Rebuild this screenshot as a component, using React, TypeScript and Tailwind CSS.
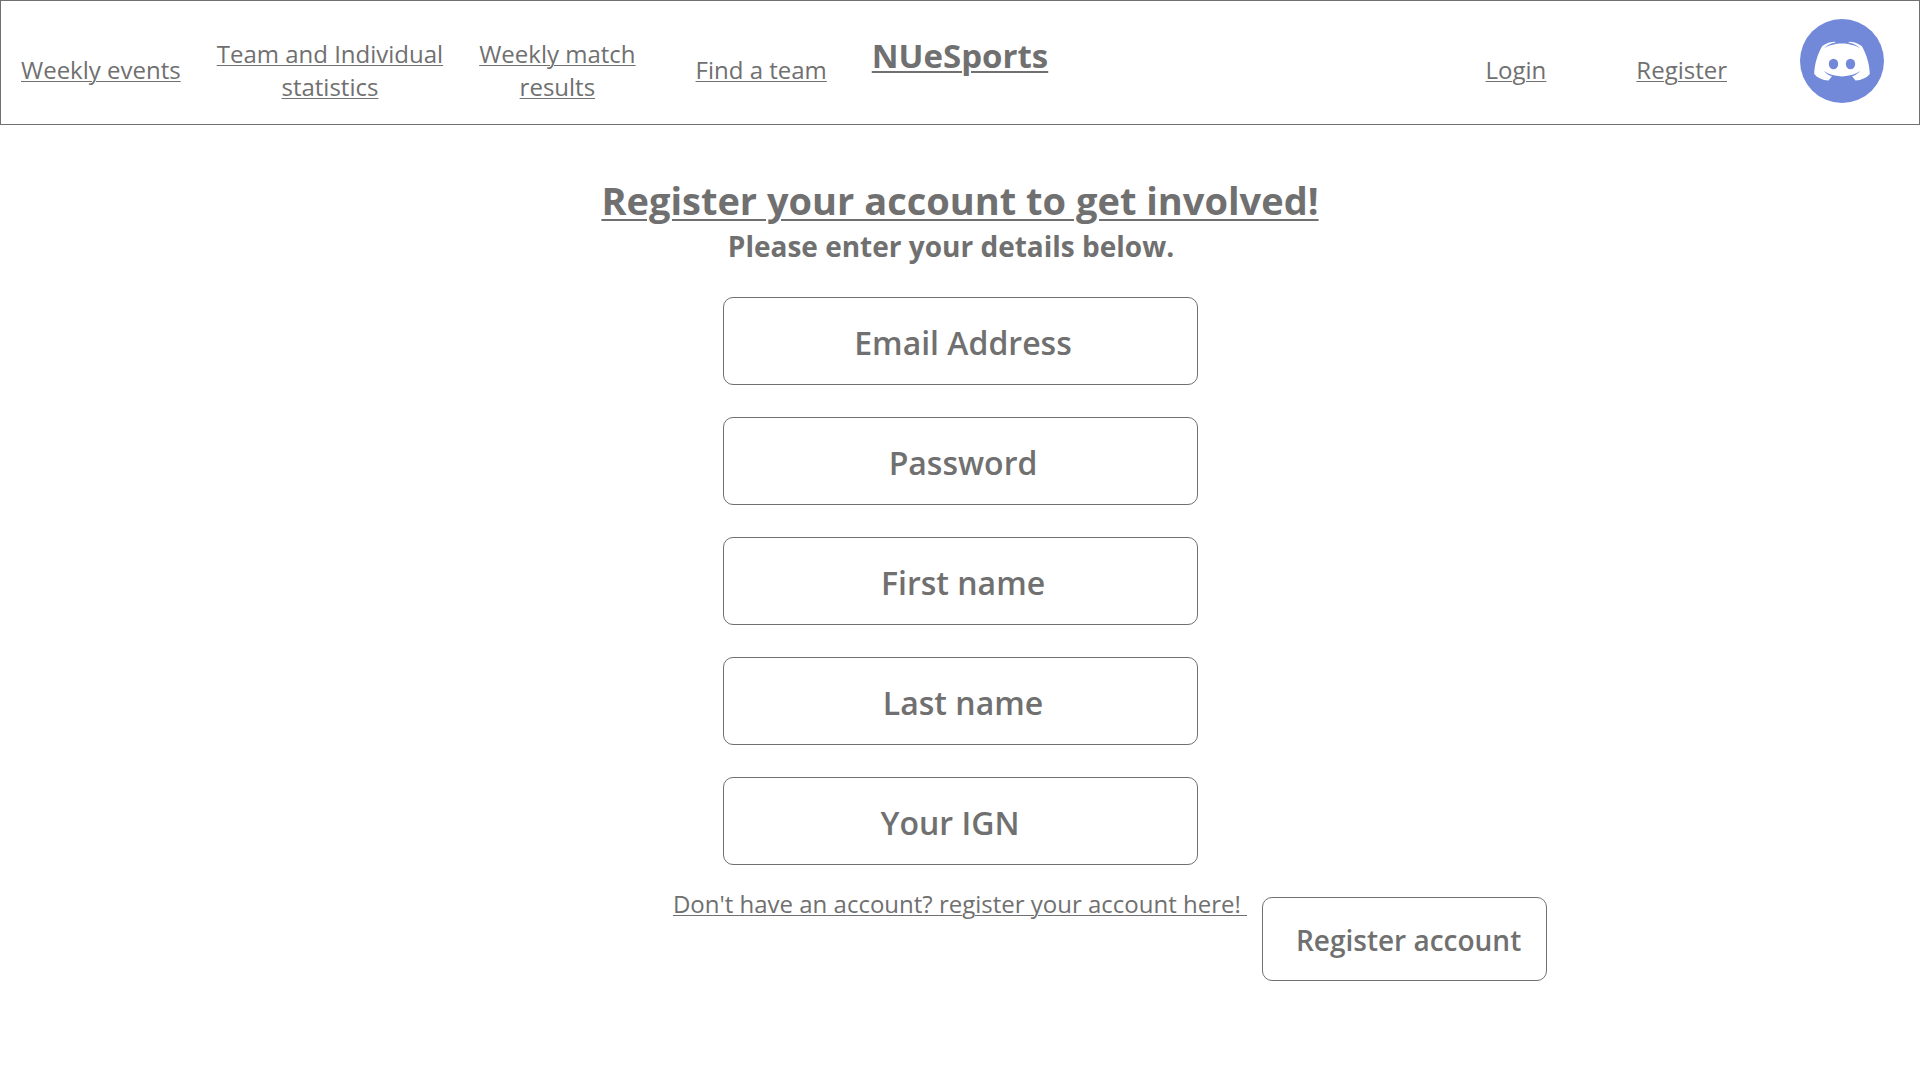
type Field = { id: string; label: string; type: string; className: string };

const fields: Field[] = [
  { id: "email", label: "Email Address", type: "email", className: "pl-1.5" },
  { id: "password", label: "Password", type: "password", className: "pl-1.5" },
  { id: "first-name", label: "First name", type: "text", className: "pl-1.5" },
  { id: "last-name", label: "Last name", type: "text", className: "pl-1.5" },
  { id: "ign", label: "Your IGN", type: "text", className: "pr-5" },
];

const navLink =
  "text-center text-2xl leading-[33px] underline decoration-1 underline-offset-2";

function DiscordLogo() {
  return (
    <svg viewBox="0 0 84 84" className="size-[84px]" aria-hidden="true">
      <circle cx="42" cy="42" r="42" fill="#7289da" />
      <path
        fill="#fff"
        d="M35 22.8C30.6 22.9 26 24.200 22.300 27C17.500 35 14.4 45.500 14.2 55C17.500 59 22.300 61.2 28.500 61.4L32 57.200C38 58.100 46 58.100 52 57.200L55.500 61.4C61.700 61.2 66.500 59 69.800 55C69.600 45.500 66.500 35 61.700 27C58 24.200 53.400 22.900 49 22.800L48 24.900C44.500 24.500 39.500 24.500 36 24.900Z"
      />
      <g fill="#7289da">
        <ellipse cx="33.500" cy="45" rx="4.700" ry="5.200" />
        <ellipse cx="50.500" cy="45" rx="4.700" ry="5.200" />
        <path d="M23.800 29.200C27 26.300 31 24.300 35.500 23.500L36 24.900C31.500 25.600 27.500 27 23.800 29.200Z" />
        <path d="M60.200 29.200C57 26.300 53 24.300 48.500 23.500L48 24.900C52.500 25.600 56.500 27 60.200 29.200Z" />
        <path d="M23.800 52C28 55 34 57 42 57.500L42 59L31.200 58.600L32.200 57.400C28.800 56.500 26 54.600 23.800 52Z" />
        <path d="M60.200 52C56 55 50 57 42 57.500L42 59L52.800 58.600L51.800 57.400C55.200 56.500 58 54.600 60.200 52Z" />
      </g>
    </svg>
  );
}

export default function App() {
  return (
    <div className="min-h-screen bg-white font-['Open_Sans','Noto_Sans',sans-serif] text-[#707070]">
      <header className="grid min-h-[125px] grid-cols-[1fr_auto_1fr] items-center border border-[#707070]">
        <nav aria-label="Main" className="flex items-center gap-9 pt-3.5 pl-5">
          <a href="#events" className={navLink}>
            Weekly events
          </a>
          <a href="#statistics" className={navLink}>
            Team and Individual
            <br />
            statistics
          </a>
          <a href="#results" className={navLink}>
            Weekly match
            <br />
            results
          </a>
          <a href="#teams" className={`${navLink} ml-6`}>
            Find a team
          </a>
        </nav>
        <a
          href="#home"
          className="pb-3.5 text-[33px] leading-[45px] font-bold underline decoration-2 underline-offset-3"
        >
          NUeSports
        </a>
        <div className="flex items-center justify-end pr-[35px]">
          <nav aria-label="Account" className="flex gap-[90px] pt-3.5 pr-[73px]">
            <a href="#login" className={navLink}>
              Login
            </a>
            <a href="#register" className={navLink}>
              Register
            </a>
          </nav>
          <a href="#discord" aria-label="Discord" className="pb-1">
            <DiscordLogo />
          </a>
        </div>
      </header>

      <main className="pt-[49px]">
        <h1 className="text-center text-[38px] leading-[52px] font-bold underline decoration-2 underline-offset-4">
          Register your account to get involved!
        </h1>
        <p className="pr-[18px] text-center text-[28px] leading-10 font-bold">
          Please enter your details below.
        </p>
        <form onSubmit={(e) => e.preventDefault()} className="pt-[31px]">
          <div className="mx-auto flex max-w-[475px] flex-col gap-8">
            {fields.map((f) => (
              <input
                key={f.id}
                id={f.id}
                name={f.id}
                type={f.type}
                aria-label={f.label}
                placeholder={f.label}
                className={`block h-[88px] w-full rounded-[10px] border border-[#707070] pt-0.5 text-center text-[32px] font-semibold placeholder:text-[#707070] ${f.className}`}
              />
            ))}
          </div>
          <div className="grid grid-cols-[1fr_auto_1fr] items-start pt-[22px]">
            <a href="#register" className={`${navLink} col-start-2 whitespace-pre`}>
              {"Don't have an account? register your account here! "}
            </a>
            <button
              type="submit"
              className="mt-[10px] ml-[15px] h-[84px] w-[285px] rounded-[10px] border border-[#707070] pt-0.5 pl-2 text-[28px] font-semibold"
            >
              Register account
            </button>
          </div>
        </form>
      </main>
    </div>
  );
}
